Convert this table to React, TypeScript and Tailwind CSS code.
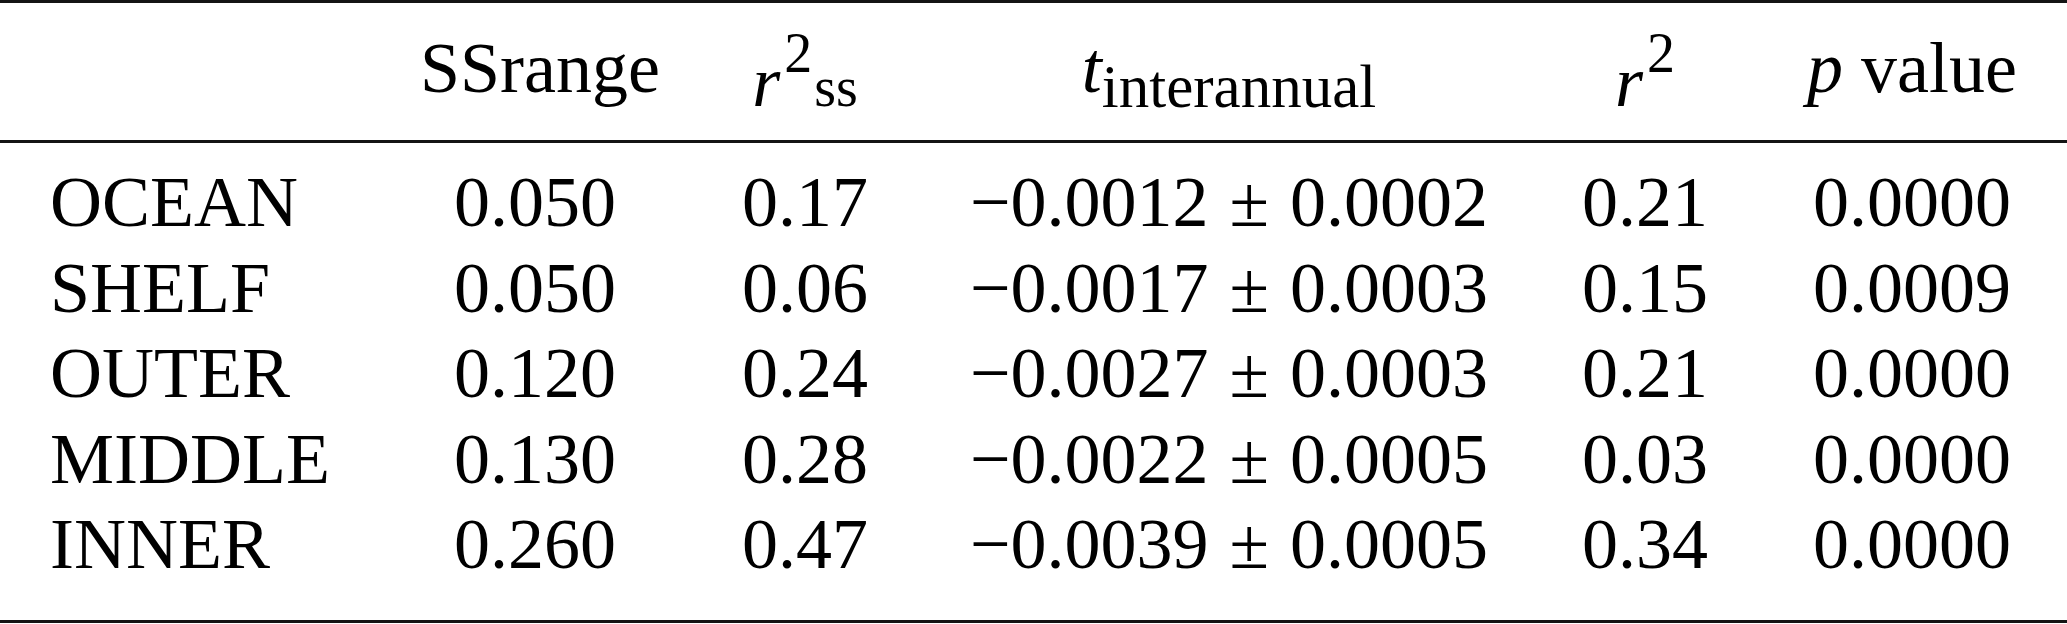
const rows = [
  { name: "OCEAN", range: "0.050", rss: "0.17", trend: "0.0012", err: "0.0002", r2: "0.21", p: "0.0000" },
  { name: "SHELF", range: "0.050", rss: "0.06", trend: "0.0017", err: "0.0003", r2: "0.15", p: "0.0009" },
  { name: "OUTER", range: "0.120", rss: "0.24", trend: "0.0027", err: "0.0003", r2: "0.21", p: "0.0000" },
  { name: "MIDDLE", range: "0.130", rss: "0.28", trend: "0.0022", err: "0.0005", r2: "0.03", p: "0.0000" },
  { name: "INNER", range: "0.260", rss: "0.47", trend: "0.0039", err: "0.0005", r2: "0.34", p: "0.0000" },
];

const cols = "grid grid-cols-[420px_230px_310px_538px_294px_240px] pr-[35px]";

const App = () => {
  return (
    <div className="w-[2067px] h-[624px] bg-white text-black font-['Liberation_Serif',serif] text-[72px]">
      <div className="h-[3px] bg-[#141414]" />

      {/* header */}
      <div className={`${cols} h-[137px] pt-[22px] leading-[86px]`}>
        <div />
        <div className="text-center">SSrange</div>
        <div className="text-center">
          <span className="italic">r</span>
          <span className="text-[56px] leading-none align-[34px] ml-[4px]">2</span>
          <span className="text-[56px] leading-none ml-[2px]">ss</span>
        </div>
        <div className="text-center">
          <span className="italic">t</span>
          <span className="text-[61px] leading-none align-[-15px]">interannual</span>
        </div>
        <div className="text-center">
          <span className="italic">r</span>
          <span className="text-[56px] leading-none align-[34px] ml-[4px]">2</span>
        </div>
        <div className="text-center">
          <span className="italic">p</span> value
        </div>
      </div>

      <div className="h-[3px] bg-[#141414]" />

      {/* body */}
      <div className="pt-[17px] pb-[32px] leading-[85.5px]">
        {rows.map((row) => (
          <div key={row.name} className={cols}>
            <div className="pl-[50px]">{row.name}</div>
            <div className="text-center">{row.range}</div>
            <div className="text-center">{row.rss}</div>
            <div className="text-center whitespace-nowrap">
              {"\u2212"}
              {row.trend}
              <span className="mx-[21px]">±</span>
              {row.err}
            </div>
            <div className="text-center">{row.r2}</div>
            <div className="text-center">{row.p}</div>
          </div>
        ))}
      </div>

      <div className="h-[3px] bg-[#141414]" />
    </div>
  );
};

export default App;
